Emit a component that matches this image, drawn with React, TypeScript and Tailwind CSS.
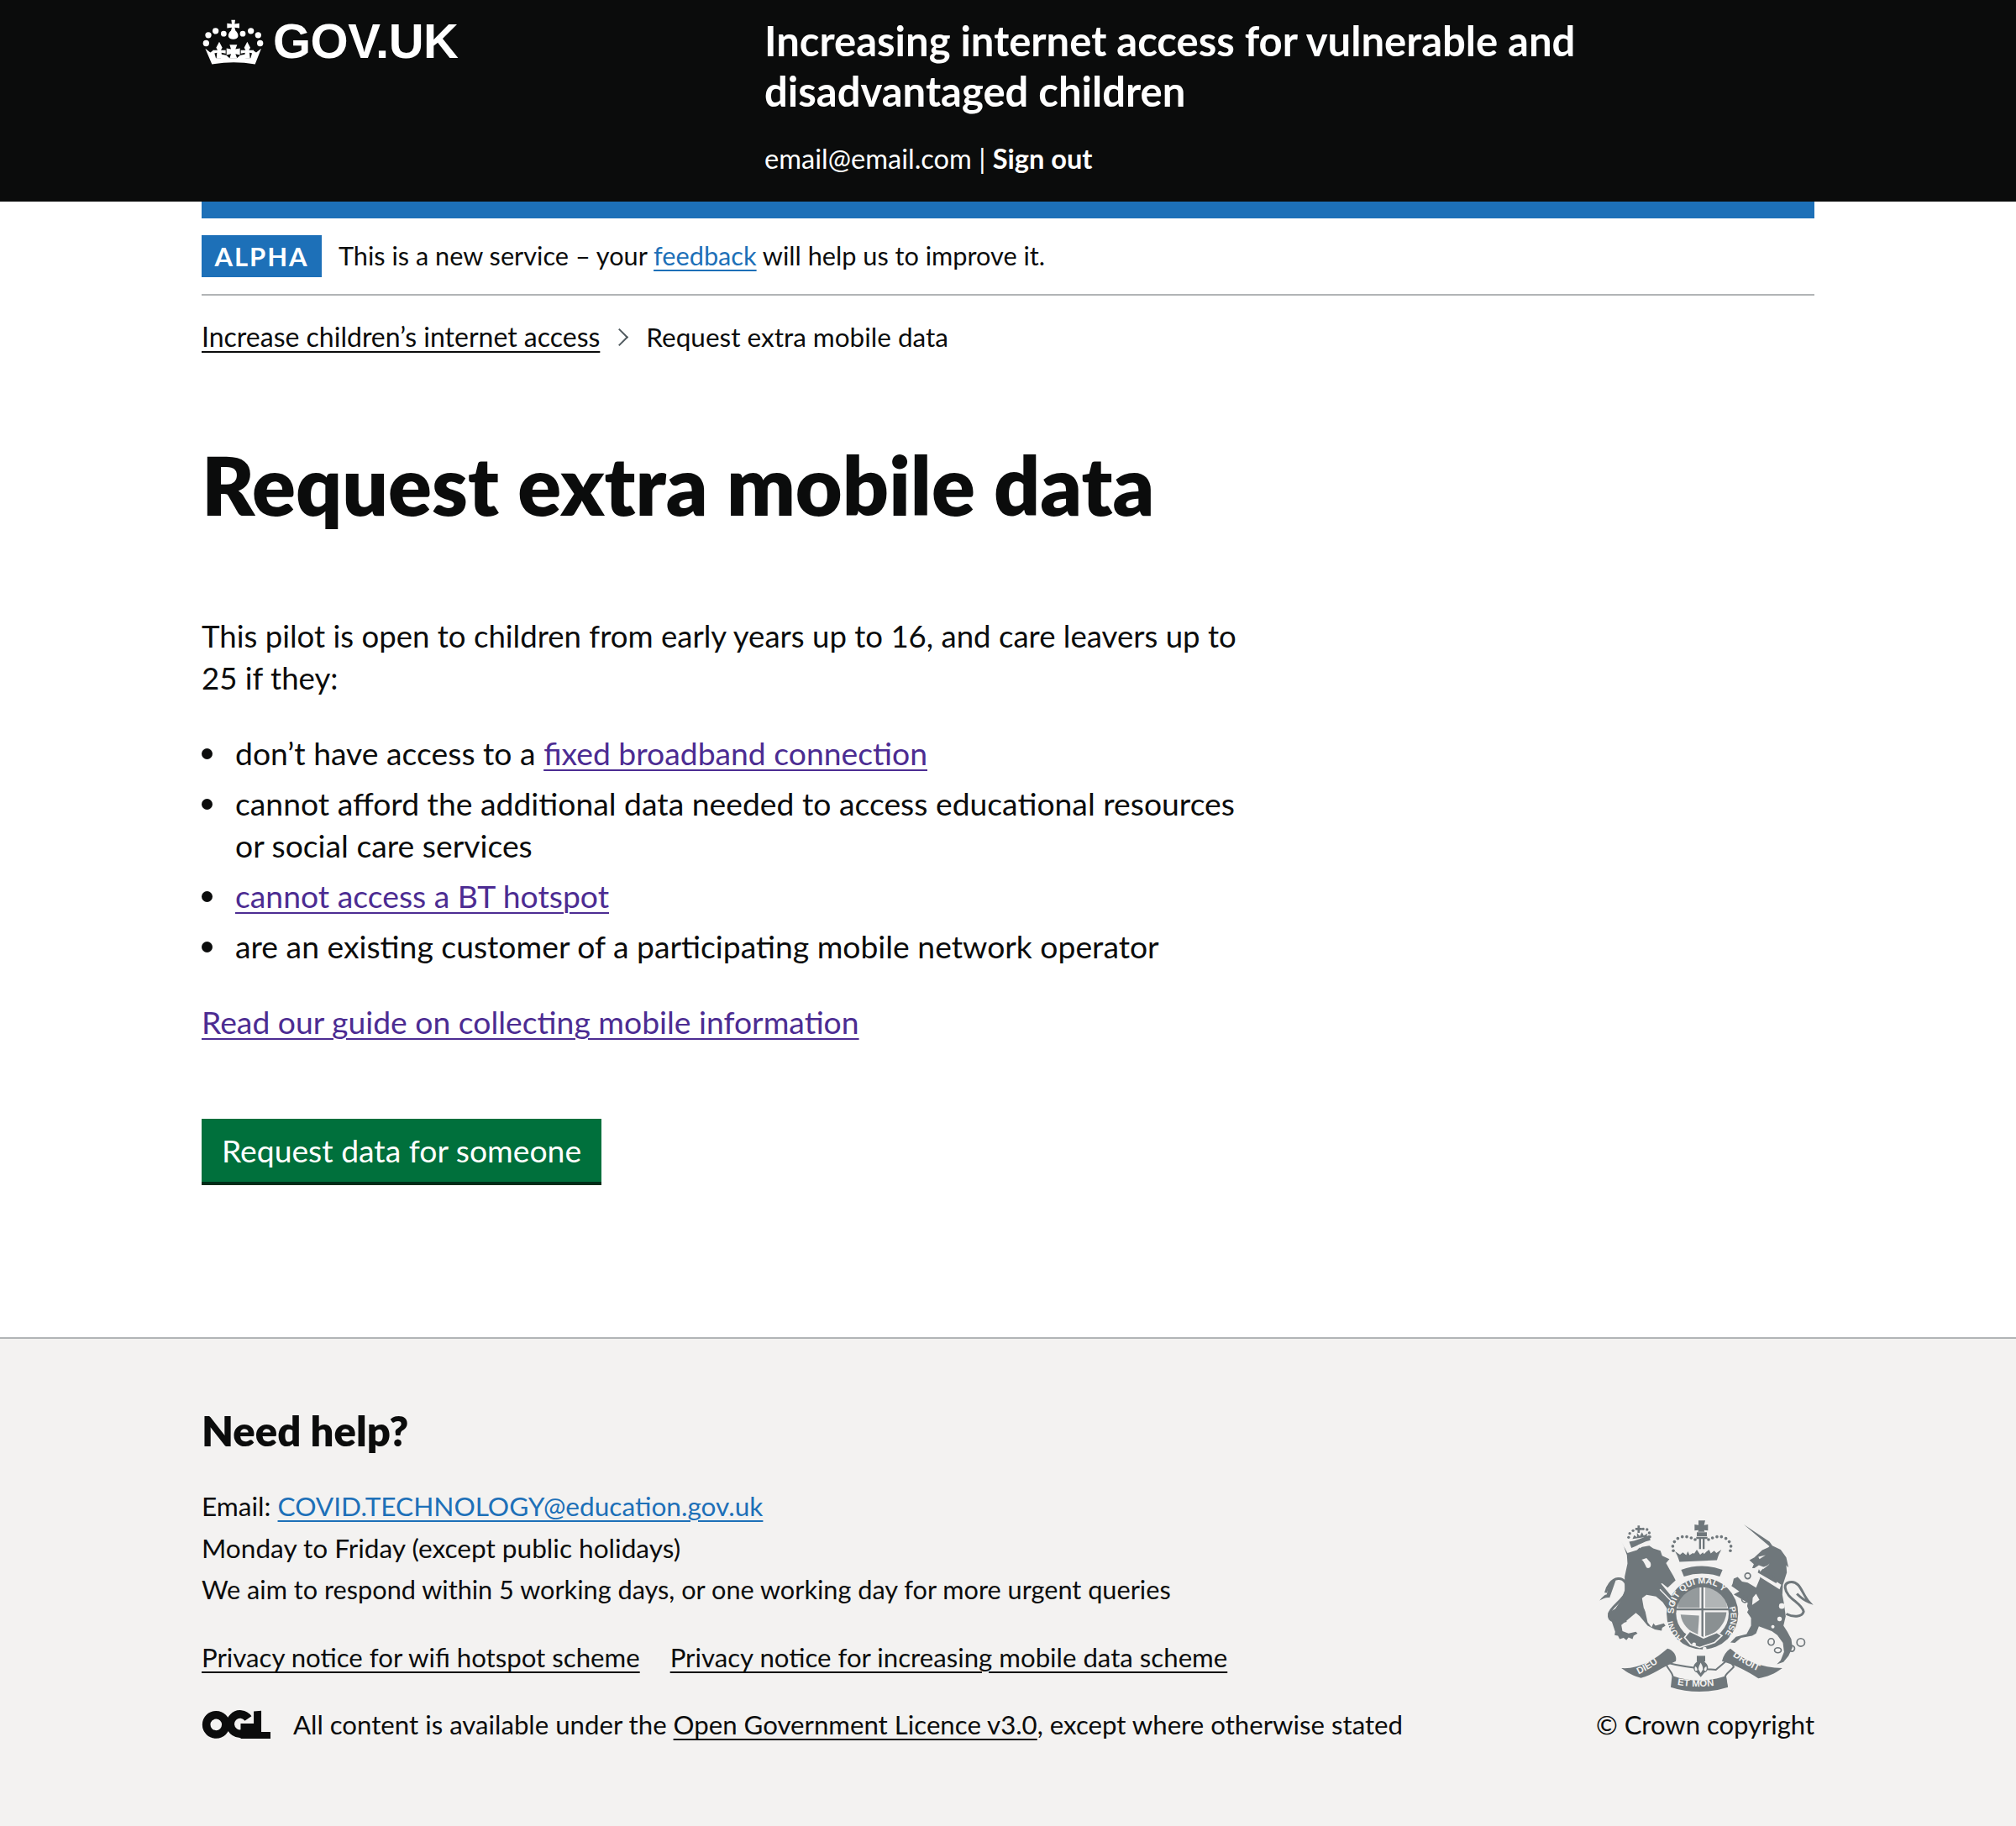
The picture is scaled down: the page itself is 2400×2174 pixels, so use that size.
const INK = "#6f777b";
const PAPER = "#f3f2f1";
const LINK = "underline decoration-2 underline-offset-[5px]";
const BULLET = "relative before:content-[''] before:absolute before:left-[-40px] before:top-[19px] before:w-[13px] before:h-[13px] before:rounded-full before:bg-[#0b0c0c]";

function Crown() {
  return (
    <svg viewBox="55 62 225 170" className="w-[75px] h-[57px] fill-white shrink-0">
      <circle cx="79" cy="124" r="11" />
      <circle cx="105" cy="109" r="11" />
      <circle cx="134" cy="119" r="10" />
      <circle cx="202" cy="119" r="10" />
      <circle cx="231" cy="109" r="11" />
      <circle cx="257" cy="124" r="11" />
      <circle cx="71" cy="153" r="11" />
      <circle cx="264" cy="153" r="11" />
      <path d="M161 70h14l-2 14 17-2v17l-17-2 3 11c7 6 11 14 9 22-2 5-9 9-17 9s-15-4-17-9c-2-8 2-16 9-22l3-11-17 2V82l17 2z" />
      <path d="M68 172l18 14 12-8 8 28h18l-1-14 20 4 12 10h26l12-10 20-4-1 14h18l8-28 12 8 18-14-22 56q-76-14-154 0z" />
      <path d="M118 148l11 21-5 9h17v12l-15-3 2 20h-20l2-20-15 3v-12h17l-5-9zM218 148l11 21-5 9h17v12l-15-3 2 20h-20l2-20-15 3v-12h17l-5-9z" />
      <path d="M155 158h27l-6 16 16-3v24l-16-4 6 16h-27l5-16-16 4v-24l16 3z" />
    </svg>
  );
}

function Ogl() {
  return (
    <svg viewBox="58 70 250 105" className="w-[83px] h-[35px] shrink-0">
      <circle cx="110" cy="122" r="35" fill="none" stroke="#0b0c0c" strokeWidth="29" />
      <path d="M225 100a35 35 0 1 0 3 34" fill="none" stroke="#0b0c0c" strokeWidth="29" />
      <path d="M198 118h47v54h-47zM245 74l27-2v76h33v24h-60z" fill="#0b0c0c" />
    </svg>
  );
}

function Arms() {
  return (
    <svg viewBox="60 55 780 625" className="w-[260px] h-[208px] block">
      <g fill={INK}>
        {/* lion */}
        <path d="M172 178l34-10 10-10 34-6 14 10 26 8 6 18 26 12-12 14 12 22 14 24 8 16-28 26-6-4-14-12-4 2 38 46 12 32 20 14-8 10-20-6-16 0-20-30-24-20-34-6-16 12 6 34 16 34 26 30 30-8 6 8-12 8-2 10-24-4-26-14-28-34-14-12-26 22-26 22 4 22 22 8 26-6 6 6-14 8-4 12-14-6-8 10-10-8-14 4-6-12-12-2 2-12-14-42-12-26 26-14 22-32 12-34 0-50 10-46-2-30-12-34-8-14z" />
        <path d="M168 420c-32 10-66 4-62-22 4-28 54-50 62-84 6-24-8-46-30-44-24 2-40 30-44 50" fill="none" stroke={INK} strokeWidth="9" />
        <path d="M72 348c10-12 16-20 26-22 4-14 2-34 22-52l10 2-22 62c-12-2-24 4-36 10z" />
        {/* lion crown */}
        <path d="M186 160l-8-22c22-4 48-14 72-24l4 18c-22 4-44 18-68 28zM190 128l6-14 10 8 0-16 10 12 8-14 6 12 14-8-4 12z" />
        <path d="M200 88h8l0-8 8 0 0 8 8 0 0 8-8 0 0 10-8 0 0-10-8 0z" />
        {[[176, 122], [180, 108], [192, 98], [228, 92], [242, 94], [250, 106], [252, 120]].map(([x, y]) => (
          <circle key={x} cx={x} cy={y} r="5" />
        ))}
        {/* central crown */}
        <path d="M426 62h24l-4 16 14-2v22l-14-2 2 6h-24l2-6-14 2V76l14 2z" />
        <path d="M420 104h36v14h-36zM428 128h7v36h-7zM441 128h7v36h-7zM418 120h40v8h-40z" />
        <path d="M358 210c-4-16-10-28-16-38l18 12 10-8 12 10 6-14 6 14 12-8 8 4-6 2 12-18 12 18 10-8 4 6 8-8 10-8 6 14 12-10 8 8 18-12c-6 10-12 22-16 38z" />
        <path d="M364 238q74-26 148 0l-10 24q-64-20-128 0z" />
        {[
          [336, 170], [334, 154], [340, 138], [352, 126], [368, 120], [384, 120], [400, 124], [414, 130],
          [462, 130], [476, 124], [492, 120], [508, 120], [524, 126], [536, 138], [542, 154], [540, 170],
        ].map(([x, y]) => (
          <circle key={`${x}-${y}`} cx={x} cy={y} r="5.5" />
        ))}
        {/* unicorn */}
        <path d="M588 76l92 62 10 14 30 14 20 28 8 36-8-8 2 26-14 44-2 36 6 32 6 44-8 34 14 22 14 26 4 30-14 30-18 22-24 8 14-14 12-30-4-32-20-28-20-14-46-18-10 26-14 8-40 8-22 18-16-2 20-20 38-10 16-30 0-28-14-20 12-22 32-22-12-22-12 14-2 26-12 20-6-16 2-12-50-30 20-10-28-20 4-8 4-18 14-6 16 16 20 4 30 18 14-34 0-24 30-22 18-24-4 6c-10 14-18 22-32 24l-16-6-16 10-8 0 6-14-16-14 18-10 28-26 22-10 4-4z" />
        <path d="M740 396c24 12 56 12 62-8-6-32-62-46-66-86-2-20 28-28 46-10 14 14 22 42 40 62-18-6-30-16-44-30" fill="none" stroke={INK} strokeWidth="9" />
        {/* ribbons */}
        <path d="M150 590c60 5 120-30 165-70 20 5 35 25 30 45-45 20-85 50-125 60-25-5-50-20-70-35z" />
        <path d="M308 572c12 28 26 34 26 48l-4 36c60 20 138 20 198 0l-6-38c8-14 18-18 30-32-2-10-20-26-24-24-16 14-32 26-40 34-50-4-100-6-170-24z" fill="none" stroke={INK} strokeWidth="6" />
        <path d="M334 618c60 22 126 22 190 0l6 38c-60 20-138 20-198 0z" />
        <path d="M510 565c5-20 15-35 30-45 50 45 110 68 186 70-26 20-56 32-86 37-40-27-80-47-130-62z" />
        <path d="M420 546h30v20h-30z" />
        <path d="M434 552c6 12 24 18 26 34 0 10-4 18-12 20l-14 16-14-16c-8-2-12-10-12-20 2-16 20-22 26-34z" />
      </g>
      <path d="M434 570c4 8 8 14 8 24l-8 14-8-14c0-10 4-16 8-24zM414 584c6 2 8 8 8 14l-6 2c-4-4-4-10-2-16zM454 584c-6 2-8 8-8 14l6 2c4-4 4-10 2-16z" fill={PAPER} />
      {/* garter */}
      <circle cx="440" cy="395" r="128" fill={INK} />
      <circle cx="440" cy="395" r="94" fill={PAPER} />
      <path d="M346 380h188M440 294v188" stroke={INK} strokeWidth="7" fill="none" />
      <g fill={INK}>
        <path d="M364 322c16-14 40-26 66-28v80h-78c0-18 4-36 12-52z" opacity="0.72" />
        <path d="M450 294c26 2 46 14 62 28 10 16 16 34 16 52h-78z" opacity="0.5" />
        <path d="M362 398l66 4c0 20-4 54-4 70-34-14-58-42-62-74z" opacity="0.72" />
        <path d="M450 390h76c-2 36-32 78-76 86z" opacity="0.8" />
      </g>
      <path d="M376 480l18-22 50 24 48-20 18 12-26 24-54 18-32-10z" fill={INK} stroke={PAPER} strokeWidth="5" />
      <circle cx="410" cy="505" r="7" fill={PAPER} />
      <circle cx="448" cy="521" r="7" fill={PAPER} />
      <defs>
        <path id="garterA" d="M338 395a104 104 0 0 1 190-62" />
        <path id="garterB" d="M536 372a104 104 0 0 1-30 112" />
        <path id="garterC" d="M370 484a116 116 0 0 1-38-68" />
        <path id="rib1" d="M212 612q60-28 104-72" />
        <path id="rib2" d="M350 650q84 14 170-4" />
        <path id="rib3" d="M548 546q60 44 122 68" />
      </defs>
      <g fill={PAPER} fontFamily="'Liberation Sans', sans-serif" fontWeight="700">
        <text fontSize="32"><textPath href="#garterA">SOIT QUI MAL Y</textPath></text>
        <text fontSize="30"><textPath href="#garterB">PENSE</textPath></text>
        <text fontSize="30"><textPath href="#garterC">HONI</textPath></text>
        <text fontSize="34"><textPath href="#rib1">DIEU</textPath></text>
        <text fontSize="34"><textPath href="#rib2">ET MON</textPath></text>
        <text fontSize="34"><textPath href="#rib3">DROIT</textPath></text>
      </g>
      <g fill="none" stroke={INK} strokeWidth="5">
        <circle cx="602" cy="260" r="10" />
        <circle cx="592" cy="344" r="11" />
        <ellipse cx="686" cy="496" rx="11" ry="12" />
        <ellipse cx="710" cy="526" rx="12" ry="9" />
        <ellipse cx="760" cy="520" rx="10" ry="10" />
        <circle cx="792" cy="498" r="14" />
      </g>
      <g fill={PAPER}>
        <circle cx="724" cy="368" r="10" />
        <circle cx="716" cy="414" r="8" />
        <circle cx="692" cy="442" r="6" />
        <path d="M632 232l90 60-6 16-92-58z" />
      </g>
      <path d="M638 248l4-12 6 10 8-12 4 14 8-8 0 14 10-8 2 14 10-6 2 14 12-6 6 12-6 12z" fill={INK} />
      <path d="M252 358l-20 10 6 30 6 28 14 18 16-34 26-6 10 6-8-22-20-26z" fill={PAPER} />
      <path d="M210 150l24-8-16 20zM240 196l14 16c6 16-6 24-14 18-6-12-10-24-18-28z" fill={PAPER} />
      <path d="M640 192l26-6-22 14z" fill={PAPER} />
      <path d="M288 308l50 52" stroke={PAPER} strokeWidth="4" fill="none" />
    </svg>
  );
}

export default function App() {
  return (
    <div className="min-h-[2174px] flex flex-col bg-white text-[#0b0c0c] font-['Lato',sans-serif]">
      <header className="h-[240px] bg-[#0b0c0c] text-white">
        <div className="w-[1920px] mx-auto flex">
          <div className="w-[670px] pt-[21px] flex items-start gap-[10px]">
            <Crown />
            <span className="font-['Liberation_Sans',sans-serif] font-bold text-[58px] leading-[56px] tracking-[-0.5px]">GOV.UK</span>
          </div>
          <div className="pt-[18px]">
            <div className="font-bold text-[49px] leading-[60px]">
              Increasing internet access for vulnerable and
              <br />
              disadvantaged children
            </div>
            <div className="mt-[26px] text-[32.6px] leading-[50px]">
              email@email.com | <a className="font-bold">Sign out</a>
            </div>
          </div>
        </div>
      </header>

      <div className="w-[1920px] mx-auto">
        <div className="h-[20px] bg-[#1d70b8]" />
        <div className="pt-[20px] pb-[20px] flex items-center border-b-2 border-[#b1b4b6]">
          <strong className="w-[143px] h-[50px] flex items-center justify-center bg-[#1d70b8] text-white text-[31px] font-bold tracking-[2px]">ALPHA</strong>
          <p className="ml-[20px] text-[30.7px] leading-[50px]">
            This is a new service – your <a className={`text-[#1d70b8] ${LINK}`}>feedback</a> will help us to improve it.
          </p>
        </div>
        <nav className="mt-[29px] flex items-center text-[32px] leading-[40px]">
          <a className={LINK}>Increase children’s internet access</a>
          <span className="ml-[16px] mr-[24px] w-[15px] h-[15px] border-t-2 border-r-2 border-[#505a5f] rotate-45" />
          <span className="text-[31.5px]">Request extra mobile data</span>
        </nav>

        <main className="w-[1240px]">
          <h1 className="mt-[101px] font-[800] text-[96.3px] leading-[110px] whitespace-nowrap">Request extra mobile data</h1>
          <p className="mt-[100px] text-[36.6px] leading-[50px]">
            This pilot is open to children from early years up to 16, and care leavers up to 25 if they:
          </p>
          <ul className="mt-[40px] pl-[40px] text-[37.3px] leading-[50px] flex flex-col gap-[10px]">
            <li className={BULLET}>don’t have access to a <a className={`text-[#4c2c92] ${LINK}`}>fixed broadband connection</a></li>
            <li className={BULLET}>cannot afford the additional data needed to access educational resources or social care services</li>
            <li className={BULLET}><a className={`text-[#4c2c92] ${LINK}`}>cannot access a BT hotspot</a></li>
            <li className={BULLET}>are an existing customer of a participating mobile network operator</li>
          </ul>
          <p className="mt-[40px] text-[37.3px] leading-[50px]">
            <a className={`text-[#4c2c92] ${LINK}`}>Read our guide on collecting mobile information</a>
          </p>
          <button className="mt-[90px] block w-[476px] h-[75px] bg-[#00703c] shadow-[0_4px_0_#002d18] text-white text-[37.3px] leading-[50px]">Request data for someone</button>
        </main>
      </div>

      <footer className="mt-[185px] flex-1 bg-[#f3f2f1] border-t-2 border-[#b1b4b6]">
        <div className="w-[1920px] mx-auto pt-[79px] flex items-end justify-between">
          <div>
            <h2 className="font-[800] text-[49px] leading-[60px]">Need help?</h2>
            <div className="mt-[35px] leading-[50px]">
              <p className="text-[31.6px]">Email: <a className={`text-[#1d70b8] ${LINK}`}>COVID.TECHNOLOGY@education.gov.uk</a></p>
              <p className="text-[31.6px]">Monday to Friday (except public holidays)</p>
              <p className="text-[30.7px]">We aim to respond within 5 working days, or one working day for more urgent queries</p>
            </div>
            <div className="mt-[30px] flex gap-[36px] text-[31.2px] leading-[50px]">
              <a className={LINK}>Privacy notice for wifi hotspot scheme</a>
              <a className={LINK}>Privacy notice for increasing mobile data scheme</a>
            </div>
            <div className="mt-[30px] flex items-center text-[31.2px] leading-[50px]">
              <Ogl />
              <p className="ml-[26px]">All content is available under the <a className={LINK}>Open Government Licence v3.0</a>, except where otherwise stated</p>
            </div>
          </div>
          <div className="flex flex-col items-end">
            <Arms />
            <p className="mt-[12px] text-[31px] leading-[50px]">© Crown copyright</p>
          </div>
        </div>
      </footer>
    </div>
  );
}
